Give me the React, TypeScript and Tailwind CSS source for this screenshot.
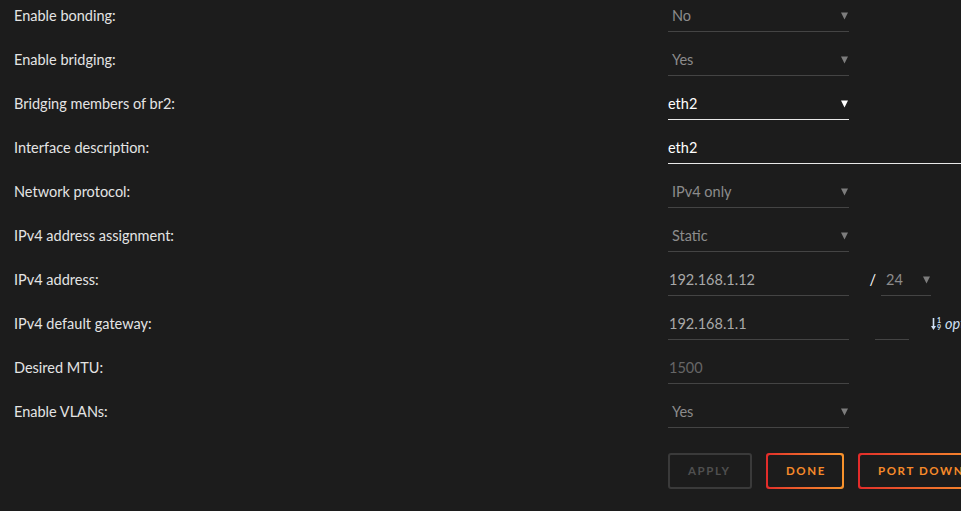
import React from 'react';

type Row = {
  label: string;
  kind: 'select' | 'input';
  value: string;
  active?: boolean;
  wide?: boolean;
  muted?: boolean;
  extra?: 'prefix' | 'gateway';
};

const ROWS: Row[] = [
  { label: 'Enable bonding:', kind: 'select', value: 'No' },
  { label: 'Enable bridging:', kind: 'select', value: 'Yes' },
  { label: 'Bridging members of br2:', kind: 'select', value: 'eth2', active: true },
  { label: 'Interface description:', kind: 'input', value: 'eth2', active: true, wide: true },
  { label: 'Network protocol:', kind: 'select', value: 'IPv4 only' },
  { label: 'IPv4 address assignment:', kind: 'select', value: 'Static' },
  { label: 'IPv4 address:', kind: 'input', value: '192.168.1.12', extra: 'prefix' },
  { label: 'IPv4 default gateway:', kind: 'input', value: '192.168.1.1', extra: 'gateway' },
  { label: 'Desired MTU:', kind: 'input', value: '1500', muted: true },
  { label: 'Enable VLANs:', kind: 'select', value: 'Yes' },
];

function Caret({ active }: { active?: boolean }) {
  return (
    <svg width="7" height="8" viewBox="0 0 7 8" className="shrink-0">
      <path d="M0 0.5 H7 L3.5 7.5 Z" fill={active ? '#ffffff' : '#7d7d7d'} />
    </svg>
  );
}

function Field({ row }: { row: Row }) {
  const border = row.active ? 'border-[#e8e8e8]' : 'border-[#444444]';
  if (row.kind === 'select') {
    return (
      <div
        className={`flex h-[32px] w-[181px] shrink-0 items-center justify-between border-b ${border} ${
          row.active ? 'pl-0 pr-[1px] text-white' : 'pl-[4px] pr-[1px] text-[#8c8c8c]'
        }`}
      >
        <span>{row.value}</span>
        <Caret active={row.active} />
      </div>
    );
  }
  const color = row.active ? 'text-white' : row.muted ? 'text-[#666666]' : 'text-[#a8a8a8]';
  return (
    <div
      className={`flex h-[32px] shrink-0 items-center border-b ${border} ${color} ${
        row.wide ? 'w-[320px]' : 'w-[181px] pl-[1px]'
      }`}
    >
      {row.value}
    </div>
  );
}

function GradientButton({ label, width }: { label: string; width: string }) {
  return (
    <div className={`shrink-0 rounded-[3px] bg-gradient-to-r from-[#e22a2a] to-[#f7932c] p-[2px] ${width}`}>
      <div className="flex h-[32px] items-center whitespace-nowrap rounded-[2px] bg-[#1c1c1c] pl-[18px] text-[11.5px] font-bold tracking-[1.6px] text-[#f68a2a]">
        {label}
      </div>
    </div>
  );
}

export default function App() {
  return (
    <div className="h-[511px] w-[961px] overflow-hidden bg-[#1c1c1c] font-['Lato',sans-serif] text-[14.5px]">
      <div className="flex flex-col gap-[12px]">
        {ROWS.map((row) => (
          <div key={row.label} className="flex items-start">
            <div className="flex h-[32px] w-[668px] shrink-0 items-center pl-[14px] text-[#e4e4e4]">
              {row.label}
            </div>
            <Field row={row} />
            {row.extra === 'prefix' ? (
              <div className="flex shrink-0 items-start">
                <div className="flex h-[32px] w-[32px] items-center justify-end pr-[5px] text-white">/</div>
                <div className="flex h-[32px] w-[50px] items-center justify-between border-b border-[#444444] pl-[5px] pr-[1px] text-[#8c8c8c]">
                  <span>24</span>
                  <Caret />
                </div>
              </div>
            ) : null}
            {row.extra === 'gateway' ? (
              <div className="flex shrink-0 items-start">
                <div className="ml-[26px] h-[32px] w-[34px] shrink-0 border-b border-[#444444]" />
                <div className="ml-[22px] flex h-[32px] shrink-0 items-center gap-[4px] whitespace-nowrap text-[#cfe0f5]">
                  <span className="flex items-center gap-[1px]">
                    <svg width="5" height="12" viewBox="0 0 5 12">
                      <path d="M2.5 0 V9" stroke="#cfe0f5" strokeWidth="1.6" />
                      <path d="M0 8 H5 L2.5 12 Z" fill="#cfe0f5" />
                    </svg>
                    <span className="flex flex-col text-[7px] leading-[7px] font-bold">
                      <span>1</span>
                      <span>9</span>
                    </span>
                  </span>
                  <span className="italic">optional</span>
                </div>
              </div>
            ) : null}
          </div>
        ))}
        <div className="mt-[13px] flex gap-[14px] pl-[668px]">
          <div className="flex h-[36px] w-[84px] shrink-0 items-center rounded-[3px] border-2 border-[#3a3a3a] pl-[18px] text-[11.5px] font-bold tracking-[1.6px] text-[#4f4f4f]">
            APPLY
          </div>
          <GradientButton label="DONE" width="w-[78px]" />
          <GradientButton label="PORT DOWN" width="w-[130px]" />
        </div>
      </div>
    </div>
  );
}
